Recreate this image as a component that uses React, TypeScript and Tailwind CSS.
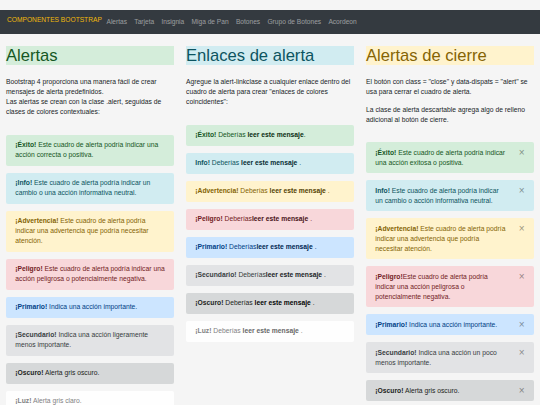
import { ReactNode } from 'react';

type Variant = 'success' | 'info' | 'warning' | 'danger' | 'primary' | 'secondary' | 'dark' | 'light';

const styles: Record<Variant, { box: string; link: string }> = {
  success: { box: 'bg-[#d4edda] text-[#155724]', link: 'text-[#0b2e13]' },
  info: { box: 'bg-[#d1ecf1] text-[#0c5460]', link: 'text-[#062c33]' },
  warning: { box: 'bg-[#fff3cd] text-[#856404]', link: 'text-[#533f03]' },
  danger: { box: 'bg-[#f8d7da] text-[#721c24]', link: 'text-[#491217]' },
  primary: { box: 'bg-[#cce5ff] text-[#004085]', link: 'text-[#002752]' },
  secondary: { box: 'bg-[#e2e3e5] text-[#383d41]', link: 'text-[#202326]' },
  dark: { box: 'bg-[#d6d8d9] text-[#1b1e21]', link: 'text-[#040505]' },
  light: { box: 'bg-[#fefefe] text-[#818182]', link: 'text-[#686868]' }
};

const navLinks = ['Alertas', 'Tarjeta', 'Insignia', 'Miga de Pan', 'Botones', 'Grupo de Botones', 'Acordeon'];

function Alert({
  variant,
  dismissible = false,
  children
}: {
  variant: Variant;
  dismissible?: boolean;
  children: ReactNode;
}) {
  return (
    <div
      className={`relative mb-[7px] whitespace-nowrap rounded-[2px] border border-transparent py-[4.5px] pl-[8.3px] text-[6.75px] leading-[10px] ${
        dismissible ? 'pr-[25px]' : 'pr-[6px]'
      } ${styles[variant].box}`}
    >
      {children}
      {dismissible && (
        <button
          type="button"
          className="absolute right-0 top-0 px-[8.3px] py-[5px] text-[10px] leading-none text-black opacity-40"
        >
          ×
        </button>
      )}
    </div>
  );
}

function LinkAlert({ variant, label, before, after }: { variant: Variant; label: string; before: string; after: string }) {
  return (
    <Alert variant={variant}>
      <strong>{label}</strong>
      {before}
      <a className={`font-bold ${styles[variant].link}`}>leer este mensaje</a>
      {after}
    </Alert>
  );
}

function Heading({ className, children }: { className: string; children: ReactNode }) {
  return <h1 className={`mb-[12px] text-[16.6px] leading-[1.2] ${className}`}>{children}</h1>;
}

export default function App() {
  return (
    <div className="h-[405px] overflow-hidden bg-[#f5f5f5] pt-[10px] font-['Liberation_Sans',Arial,sans-serif] text-[#212529]">
      <nav className="flex h-[24px] items-center bg-[#343a40] px-[7px]">
        <span className="mb-[5px] mr-[1px] text-[6.65px] text-[#f0b90b]">COMPONENTES BOOTSTRAP</span>
        <ul className="flex">
          {navLinks.map((link) => (
            <li key={link} className="px-[3.65px] text-[6.62px] text-white/50">
              {link}
            </li>
          ))}
        </ul>
      </nav>

      <div className="grid grid-cols-3 gap-[12px] px-[6px] pt-[11.5px] text-[6.75px] leading-[10px]">
        <section>
          <Heading className="bg-[#d4edda] text-[#155724]">Alertas</Heading>
          <p className="mb-[7.5px]">
            Bootstrap 4 proporciona una manera fácil de crear mensajes de alerta predefinidos.
            <br />
            Las alertas se crean con la clase .alert, seguidas de clases de colores contextuales:
          </p>
          <div className="mt-[17.5px]">
            <Alert variant="success">
              <strong>¡Éxito!</strong> Este cuadro de alerta podría indicar una
              <br />
              acción correcta o positiva.
            </Alert>
            <Alert variant="info">
              <strong>¡Info!</strong> Este cuadro de alerta podría indicar un
              <br />
              cambio o una acción informativa neutral.
            </Alert>
            <Alert variant="warning">
              <strong>¡Advertencia!</strong> Este cuadro de alerta podría
              <br />
              indicar una advertencia que podría necesitar
              <br />
              atención.
            </Alert>
            <Alert variant="danger">
              <strong>¡Peligro!</strong> Este cuadro de alerta podría indicar una
              <br />
              acción peligrosa o potencialmente negativa.
            </Alert>
            <Alert variant="primary">
              <strong>¡Primario!</strong> Indica una acción importante.
            </Alert>
            <Alert variant="secondary">
              <strong>¡Secundario!</strong> Indica una acción ligeramente
              <br />
              menos importante.
            </Alert>
            <Alert variant="dark">
              <strong>¡Oscuro!</strong> Alerta gris oscuro.
            </Alert>
            <Alert variant="light">
              <strong>¡Luz!</strong> Alerta gris claro.
            </Alert>
          </div>
        </section>

        <section>
          <Heading className="bg-[#d1ecf1] text-[#0c5460]">Enlaces de alerta</Heading>
          <p className="mb-[7.5px]">
            Agregue la alert-linkclase a cualquier enlace dentro del cuadro de alerta para crear "enlaces de colores
            coincidentes":
          </p>
          <div className="mt-[17.5px]">
            <LinkAlert variant="success" label="¡Éxito!" before=" Deberías " after="." />
            <LinkAlert variant="info" label="Info!" before=" Deberías " after=" ." />
            <LinkAlert variant="warning" label="¡Advertencia!" before=" Deberías " after=" ." />
            <LinkAlert variant="danger" label="¡Peligro!" before=" Deberías" after=" ." />
            <LinkAlert variant="primary" label="¡Primario!" before=" Deberías" after=" ." />
            <LinkAlert variant="secondary" label="¡Secundario!" before=" Deberías" after=" ." />
            <LinkAlert variant="dark" label="¡Oscuro!" before=" Deberías " after=" ." />
            <LinkAlert variant="light" label="¡Luz!" before=" Deberías " after=" ." />
          </div>
        </section>

        <section>
          <Heading className="bg-[#fff3cd] text-[#856404]">Alertas de cierre</Heading>
          <p className="mb-[7.5px]">El botón con class = "close" y data-dispats = "alert" se usa para cerrar el cuadro de alerta.</p>
          <p className="mb-[7.5px]">La clase de alerta descartable agrega algo de relleno adicional al botón de cierre.</p>
          <div className="mt-[17.5px]">
            <Alert variant="success" dismissible>
              <strong>¡Éxito!</strong> Este cuadro de alerta podría indicar
              <br />
              una acción exitosa o positiva.
            </Alert>
            <Alert variant="info" dismissible>
              <strong>Info!</strong> Este cuadro de alerta podría indicar
              <br />
              un cambio o acción informativa neutral.
            </Alert>
            <Alert variant="warning" dismissible>
              <strong>¡Advertencia!</strong> Este cuadro de alerta podría
              <br />
              indicar una advertencia que podría
              <br />
              necesitar atención.
            </Alert>
            <Alert variant="danger" dismissible>
              <strong>¡Peligro!</strong>Este cuadro de alerta podría
              <br />
              indicar una acción peligrosa o
              <br />
              potencialmente negativa.
            </Alert>
            <Alert variant="primary" dismissible>
              <strong>¡Primario!</strong> Indica una acción importante.
            </Alert>
            <Alert variant="secondary" dismissible>
              <strong>¡Secundario!</strong> Indica una acción un poco
              <br />
              menos importante.
            </Alert>
            <Alert variant="dark" dismissible>
              <strong>¡Oscuro!</strong> Alerta gris oscuro.
            </Alert>
          </div>
        </section>
      </div>
    </div>
  );
}
